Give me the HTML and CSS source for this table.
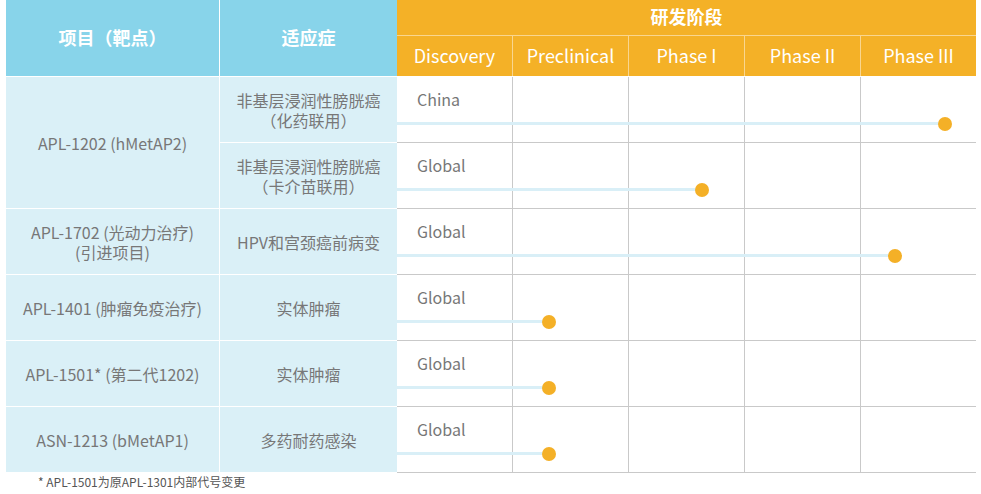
FILE: index.html
```html
<!DOCTYPE html>
<html lang="zh-CN">

<head>
    <meta charset="UTF-8">
    <meta name="viewport" content="width=device-width, initial-scale=1.0">
    <title>研发管线</title>
    <link rel="stylesheet" href="styles.css">
</head>

<body>
    <div class="pipeline">
        <!-- 项目 / 适应症 -->
        <div class="info">
            <div class="head">项目（靶点）</div>
            <div class="head">适应症</div>

            <div class="cell span2">APL-1202 (hMetAP2)</div>
            <div class="cell">非基层浸润性膀胱癌<br>（化药联用）</div>
            <div class="cell">非基层浸润性膀胱癌<br>（卡介苗联用）</div>

            <div class="cell">APL-1702 (光动力治疗)<br>(引进项目)</div>
            <div class="cell">HPV和宫颈癌前病变</div>

            <div class="cell">APL-1401 (肿瘤免疫治疗)</div>
            <div class="cell">实体肿瘤</div>

            <div class="cell">APL-1501* (第二代1202)</div>
            <div class="cell">实体肿瘤</div>

            <div class="cell">ASN-1213 (bMetAP1)</div>
            <div class="cell">多药耐药感染</div>
        </div>

        <!-- 研发阶段 -->
        <div class="stages">
            <div class="stage-title">研发阶段</div>
            <div class="stage-names">
                <div>Discovery</div>
                <div>Preclinical</div>
                <div>Phase I</div>
                <div>Phase II</div>
                <div>Phase III</div>
            </div>

            <div class="track">
                <div class="slot">China</div><div class="slot"></div><div class="slot"></div><div class="slot"></div><div class="slot"></div>
                <div class="bar" style="width: 548px"></div>
            </div>
            <div class="track">
                <div class="slot">Global</div><div class="slot"></div><div class="slot"></div><div class="slot"></div><div class="slot"></div>
                <div class="bar" style="width: 305px"></div>
            </div>
            <div class="track">
                <div class="slot">Global</div><div class="slot"></div><div class="slot"></div><div class="slot"></div><div class="slot"></div>
                <div class="bar" style="width: 498px"></div>
            </div>
            <div class="track">
                <div class="slot">Global</div><div class="slot"></div><div class="slot"></div><div class="slot"></div><div class="slot"></div>
                <div class="bar" style="width: 152px"></div>
            </div>
            <div class="track">
                <div class="slot">Global</div><div class="slot"></div><div class="slot"></div><div class="slot"></div><div class="slot"></div>
                <div class="bar" style="width: 152px"></div>
            </div>
            <div class="track">
                <div class="slot">Global</div><div class="slot"></div><div class="slot"></div><div class="slot"></div><div class="slot"></div>
                <div class="bar" style="width: 152px"></div>
            </div>
        </div>
    </div>

    <p class="note">* APL-1501为原APL-1301内部代号变更</p>
</body>

</html>
```

FILE: styles.css
```css
/* Global Styles */
body {
    font-family: "Noto Sans CJK SC", "Noto Sans", sans-serif;
    margin: 0;
    padding: 0;
    background: #fff;
    color: #777;
}

.pipeline {
    display: flex;
    padding-left: 6px;
}

/* Left table */
.info {
    display: grid;
    grid-template-columns: 213px 177px;
    grid-template-rows: 76px repeat(6, 65px);
    gap: 1px;
    width: 391px;
    background: #fff;
}

.head {
    display: flex;
    align-items: center;
    justify-content: center;
    padding-bottom: 3px;
    background: #88d4ea;
    color: #fff;
    font-size: 18px;
    font-weight: bold;
}

.cell {
    display: flex;
    align-items: center;
    justify-content: center;
    text-align: center;
    background: #daf0f7;
    font-size: 16px;
    line-height: 20px;
}

.span2 {
    grid-row: span 2;
}

/* Stage columns */
.stages {
    width: 579px;
}

.stage-title {
    height: 35px;
    line-height: 33px;
    background: #f4b127;
    border-bottom: 1px solid #f9d68f;
    color: #fff;
    text-align: center;
    font-size: 18px;
    font-weight: bold;
}

.stage-names {
    display: grid;
    grid-template-columns: repeat(5, 1fr);
    gap: 1px;
    height: 40px;
    background: #f9d68f;
    margin-bottom: 1px;
}

.stage-names div {
    display: flex;
    align-items: center;
    justify-content: center;
    padding-bottom: 2px;
    background: #f4b127;
    color: #fff;
    font-size: 18px;
}

.track {
    position: relative;
    display: grid;
    grid-template-columns: repeat(5, 1fr);
    gap: 1px;
    height: 65px;
    background: #c9c9c9;
    border-bottom: 1px solid #c9c9c9;
}

.slot {
    background: #fff;
    padding: 11px 0 0 20px;
    font-size: 16px;
    line-height: 22px;
}

.bar {
    position: absolute;
    left: 0;
    top: 45px;
    height: 3px;
    background: #d9eff7;
}

.bar::after {
    content: "";
    position: absolute;
    right: -7px;
    top: -5.5px;
    width: 14px;
    height: 14px;
    border-radius: 50%;
    background: #f4b027;
}

.note {
    margin: 1px 0 0 38px;
    font-size: 12px;
    line-height: 16px;
    color: #555;
}
```
